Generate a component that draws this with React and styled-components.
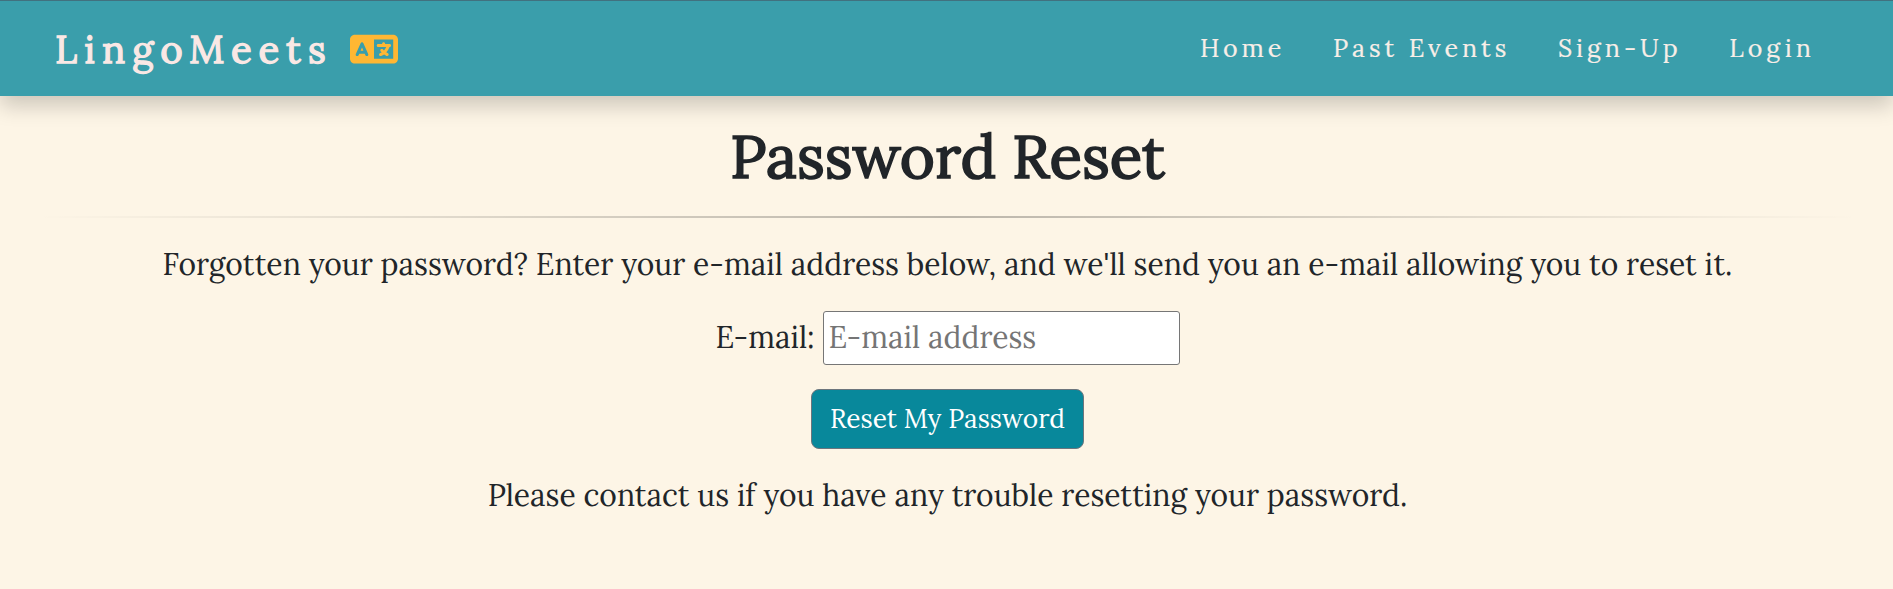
import React from "react";
import styled, { createGlobalStyle } from "styled-components";
import { FaLanguage } from "react-icons/fa6";

const GlobalStyle = createGlobalStyle`
  *, *::before, *::after { box-sizing: border-box; }
  body {
    margin: 0;
    background: #fdf5e6;
    color: #212529;
    font-family: Lora, "Liberation Serif", serif;
    overflow: hidden;
  }
`;

const Page = styled.div`
  min-height: 589px;
`;

const Navbar = styled.header`
  display: flex;
  align-items: center;
  justify-content: space-between;
  height: 96px;
  padding: 0 78px 0 55px;
  border-top: 1px solid #41717f;
  background: #3a9eab;
  box-shadow: 0 10px 20px rgba(0, 0, 0, 0.19);
`;

const Brand = styled.a`
  display: flex;
  align-items: center;
  gap: 18px;
  color: #fae8e5;
`;

const BrandName = styled.span`
  font-size: 38.4px;
  line-height: 48px;
  letter-spacing: 7px;
  -webkit-text-stroke: 1.3px currentColor;
`;

const BrandIcon = styled(FaLanguage)`
  width: 48px;
  height: 38.4px;
  margin: 1px 0 0 -0.5px;
  color: #ffb733;
`;

const NavLinks = styled.nav`
  display: flex;
  gap: 47.6px;
  padding-bottom: 1px;
`;

const NavLink = styled.a`
  color: #f8eee8;
  font-size: 25px;
  line-height: 36px;
  letter-spacing: 4px;
  white-space: nowrap;
  -webkit-text-stroke: 0.2px currentColor;
`;

const Main = styled.main`
  display: flex;
  flex-direction: column;
  align-items: center;
  padding: 24px 35px 0 37px;
`;

const Title = styled.h1`
  margin: 0;
  font-size: 60px;
  font-weight: 400;
  line-height: 72px;
  -webkit-text-stroke: 1.7px currentColor;
`;

const Divider = styled.hr`
  width: 100%;
  height: 2px;
  margin: 24px 0;
  border: 0;
  background: linear-gradient(to right, rgba(0, 0, 0, 0), rgba(0, 0, 0, 0.26), rgba(0, 0, 0, 0));
`;

const Text = styled.p`
  margin: 0;
  font-size: 30px;
  line-height: 45px;
  white-space: nowrap;
`;

const Form = styled.form`
  display: flex;
  flex-direction: column;
  align-items: center;
  gap: 24px;
  margin: 24px 0;
`;

const Field = styled.div`
  display: flex;
  align-items: center;
  gap: 8px;
`;

const Label = styled.label`
  padding-bottom: 1px;
  font-size: 30px;
  line-height: 45px;
`;

const Input = styled.input`
  width: 357px;
  height: 54px;
  padding: 1px 5px 3px;
  border: 1px solid #767676;
  border-radius: 3px;
  background: #fff;
  font: inherit;
  font-size: 30px;
  &::placeholder { color: #757575; opacity: 1; }
`;

const Button = styled.button`
  width: 273px;
  height: 60px;
  padding: 0 0 2px;
  border: 1px solid #6c757d;
  border-radius: 8px;
  background: #08889b;
  color: #fff;
  font: inherit;
  font-size: 26.3px;
  white-space: nowrap;
`;

const links = ["Home", "Past Events", "Sign-Up", "Login"];

export default function App() {
  return (
    <Page>
      <GlobalStyle />
      <Navbar>
        <Brand>
          <BrandName>LingoMeets</BrandName>
          <BrandIcon />
        </Brand>
        <NavLinks>
          {links.map((label) => (
            <NavLink key={label}>{label}</NavLink>
          ))}
        </NavLinks>
      </Navbar>
      <Main>
        <Title>Password Reset</Title>
        <Divider />
        <Text>
          Forgotten your password? Enter your e-mail address below, and we'll send you an e-mail allowing you to reset it.
        </Text>
        <Form onSubmit={(event) => event.preventDefault()}>
          <Field>
            <Label htmlFor="email">E-mail:</Label>
            <Input id="email" type="email" placeholder="E-mail address" />
          </Field>
          <Button type="submit">Reset My Password</Button>
        </Form>
        <Text>Please contact us if you have any trouble resetting your password.</Text>
      </Main>
    </Page>
  );
}
